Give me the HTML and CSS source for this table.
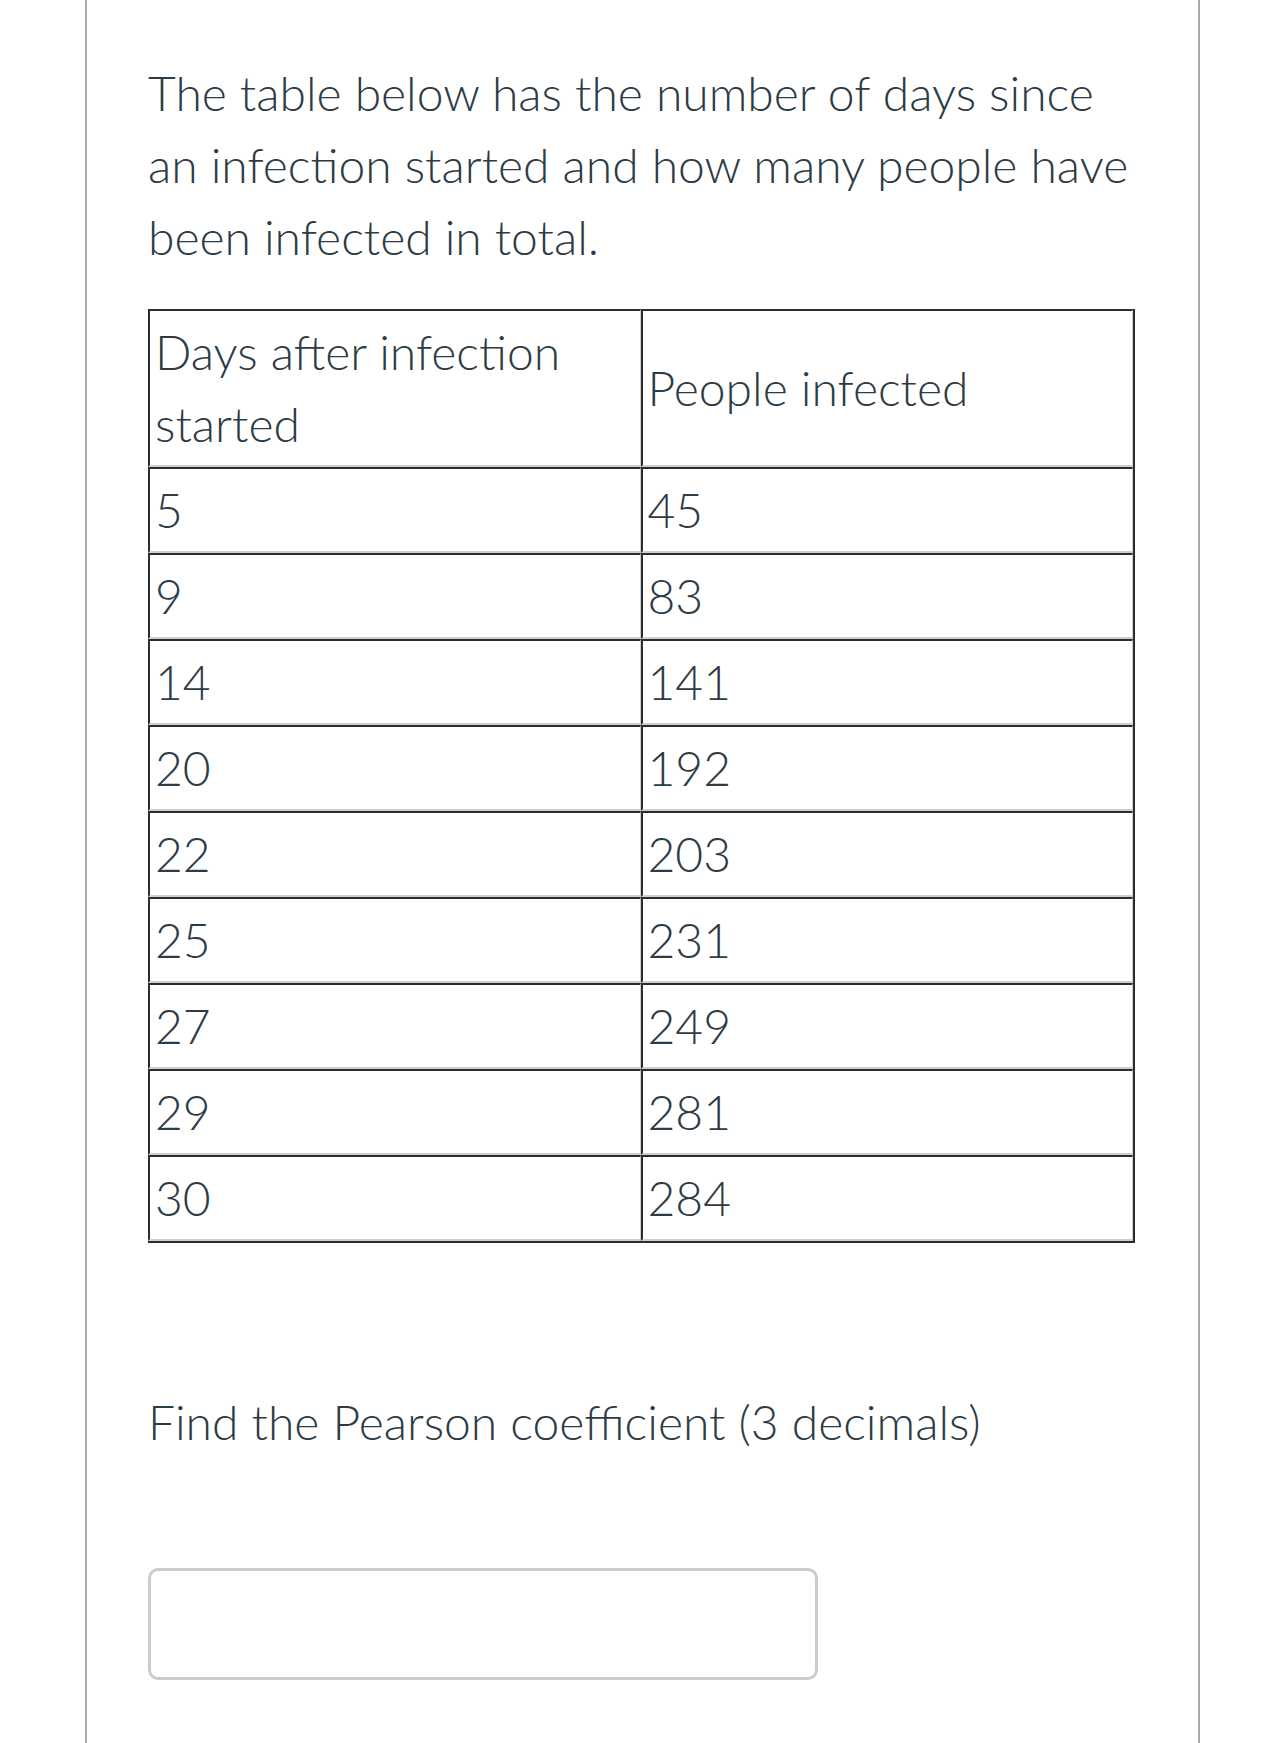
FILE: index.html
```html
<!DOCTYPE html>
<html>
<head>
<meta charset="utf-8">
<link rel="stylesheet" href="styles.css">
</head>
<body>
<div class="page">
  <div class="content">
    <p class="intro">The table below has the number of days since an infection started and how many people have been infected in total.</p>
    <table class="data">
      <tbody>
        <tr><td>Days after infection started</td><td>People infected</td></tr>
        <tr><td>5</td><td>45</td></tr>
        <tr><td>9</td><td>83</td></tr>
        <tr><td>14</td><td>141</td></tr>
        <tr><td>20</td><td>192</td></tr>
        <tr><td>22</td><td>203</td></tr>
        <tr><td>25</td><td>231</td></tr>
        <tr><td>27</td><td>249</td></tr>
        <tr><td>29</td><td>281</td></tr>
        <tr><td>30</td><td>284</td></tr>
      </tbody>
    </table>
    <p class="question">Find the Pearson coefficient (3 decimals)</p>
    <div class="answer"></div>
  </div>
</div>
</body>
</html>
```

FILE: styles.css
```css
html, body {
  margin: 0;
  padding: 0;
  background: #ffffff;
}
body {
  font-family: Lato, "Liberation Sans", sans-serif;
  font-weight: 300;
  color: #2d3b45;
  font-size: 48px;
  line-height: 72px;
}
.page {
  margin-left: 85px;
  width: 1111px;
  min-height: 1743px;
  border-left: 2px solid #aaaaaa;
  border-right: 2px solid #aaaaaa;
  box-sizing: content-box;
}
.content {
  padding: 57px 62px 0 61px;
}
.intro {
  margin: 0 0 36px 0;
}
.data {
  width: 987px;
  border-collapse: separate;
  border-spacing: 0;
  border-right: 2px solid #2d2d2d;
  border-bottom: 2px solid #2d2d2d;
  table-layout: fixed;
}
.data td {
  width: 50%;
  vertical-align: middle;
  padding: 5px 5px 5px 5px;
  border-top: 2px solid #2d2d2d;
  border-left: 2px solid #2d2d2d;
  border-bottom: 2px solid #cfcfcf;
  border-right: 1px solid #cfcfcf;
}
.question {
  margin: 143px 0 110px 0;
}
.answer {
  width: 664px;
  height: 106px;
  border: 3px solid #cccccc;
  border-radius: 10px;
}
```
